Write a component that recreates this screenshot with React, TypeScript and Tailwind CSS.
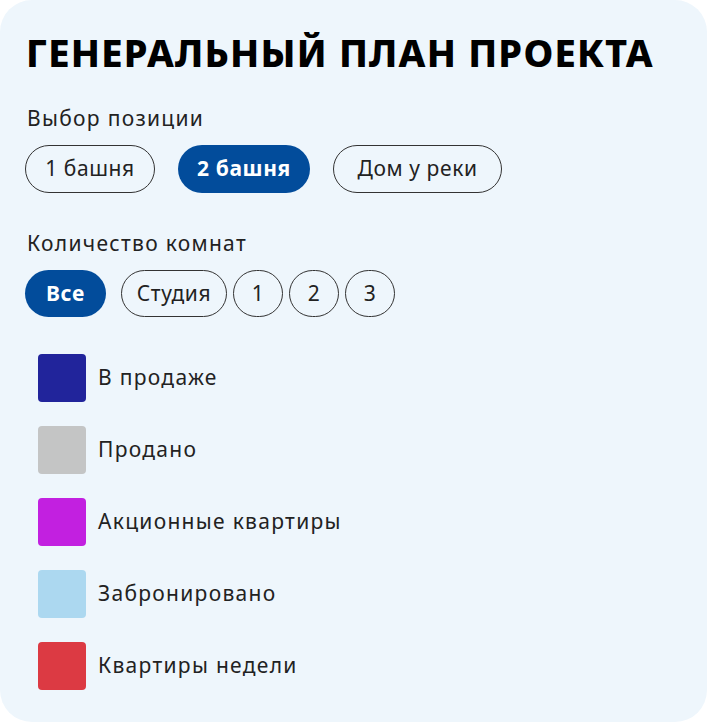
import clsx from "clsx"

const positions = [
  { label: "1 башня", w: "w-[130px]" },
  { label: "2 башня", w: "w-[132px]", active: true },
  { label: "Дом у реки", w: "w-[169px]" },
]
const rooms = [
  { label: "Студия", w: "w-[106px]" },
  { label: "1", w: "w-[50px]" },
  { label: "2", w: "w-[50px]" },
  { label: "3", w: "w-[50px]" },
]

const legend = [
  { label: "В продаже", color: "bg-[#21249b]" },
  { label: "Продано", color: "bg-[#c4c5c5]" },
  { label: "Акционные квартиры", color: "bg-[#c220e0]" },
  { label: "Забронировано", color: "bg-[#acd8f0]" },
  { label: "Квартиры недели", color: "bg-[#dc3a43]" },
]

export default function App() {
  return (
    <div className="w-[707px] h-[723px] bg-white font-['Noto_Sans',sans-serif] text-[#222] tracking-[1.3px]">
      <div className="h-[722px] rounded-[32px] bg-[#eef6fc] pl-[25px] pt-[28px]">
        <h1 className="pl-[1px] text-[38px] leading-[48px] font-extrabold tracking-[1.2px] text-black">
          ГЕНЕРАЛЬНЫЙ ПЛАН ПРОЕКТА
        </h1>

        <div className="mt-[28px] pl-[2px] text-[21px] leading-[28px]">Выбор позиции</div>
        <div className="mt-[13px] flex gap-[23px]">
          {positions.map((p) => (
            <button
              key={p.label}
              className={clsx(
                "h-[48px] rounded-full text-[21px] tracking-[0.6px]",
                p.w,
                p.active
                  ? "bg-[#024c9b] font-bold text-white"
                  : "border border-[#333] text-[#222]"
              )}
            >
              {p.label}
            </button>
          ))}
        </div>

        <div className="mt-[36px] pl-[2px] text-[21px] leading-[28px]">Количество комнат</div>
        <div className="mt-[13px] flex items-center">
          <button className="h-[47px] w-[81px] rounded-full bg-[#024c9b] text-[21px] font-bold tracking-[0.6px] text-white">
            Все
          </button>
          <div className="ml-[15px] flex gap-[6px]">
            {rooms.map((r) => (
              <button
                key={r.label}
                className={clsx(
                  "h-[47px] rounded-full border border-[#333] text-[21px] tracking-[0.6px]",
                  r.w
                )}
              >
                {r.label}
              </button>
            ))}
          </div>
        </div>

        <div className="mt-[37px] flex flex-col gap-[24px] pl-[13px]">
          {legend.map((l) => (
            <div key={l.label} className="flex items-center gap-[12px]">
              <div className={clsx("h-[48px] w-[48px] rounded-[4px]", l.color)} />
              <span className="text-[21px]">{l.label}</span>
            </div>
          ))}
        </div>
      </div>
    </div>
  )
}
